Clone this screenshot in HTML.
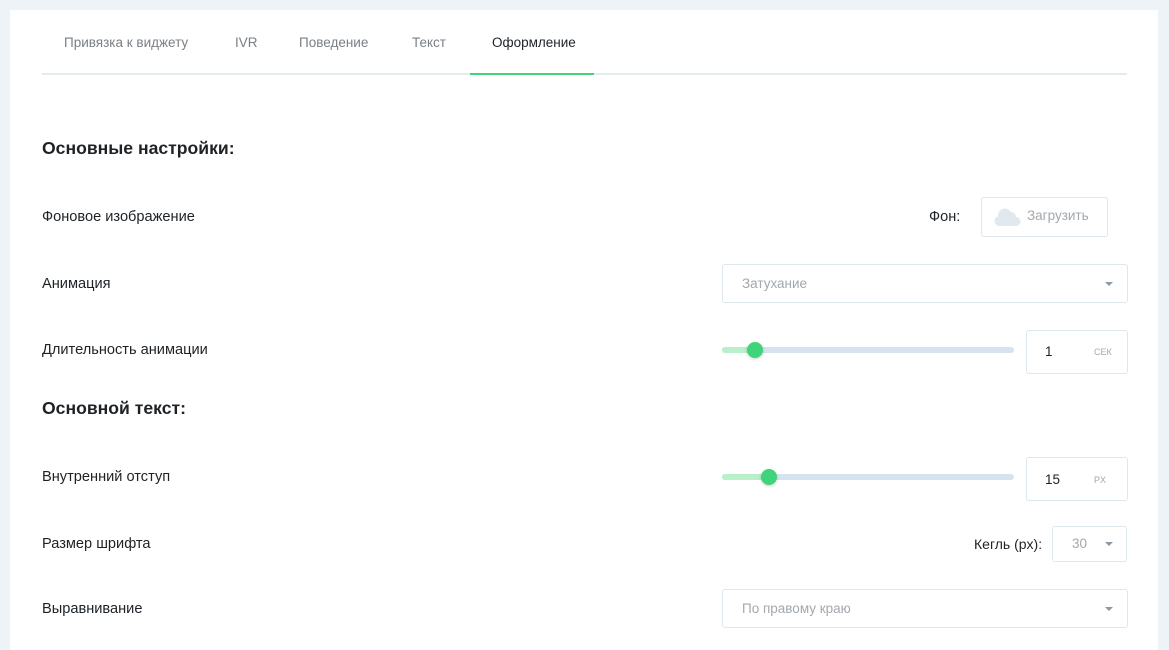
<!DOCTYPE html>
<html><head><meta charset="utf-8"><style>
body{margin:0;width:1169px;height:640px;background:#edf3f6;font-family:"Liberation Sans",sans-serif;overflow:hidden;position:relative}
.card{position:absolute;left:10px;top:10px;width:1148px;height:640px;background:#fff}
.a{position:absolute;white-space:nowrap}
.tab{top:35px;font-size:13.5px;color:#7a7f84}
.lbl{font-size:14.6px;color:#1d2226;left:42px}
.h{font-size:17.6px;font-weight:bold;color:#1d2226;left:42px}
.box{position:absolute;border:1px solid #dde8ec;border-radius:3px;box-sizing:border-box;background:#fff}
.ph{color:#a3a8ad;font-size:13.5px}
.chev{position:absolute;width:0;height:0;border-left:4px solid transparent;border-right:4px solid transparent;border-top:4px solid #8a9aa6}
.track{position:absolute;left:722px;width:292px;height:6px;border-radius:3px;background:#d5e3f0}
.fill{position:absolute;left:722px;height:6px;border-radius:3px 0 0 3px;background:#b8f0c9}
.thumb{position:absolute;width:16px;height:16px;border-radius:50%;background:#3fd37a;box-shadow:0 1px 3px rgba(0,0,0,.2)}
</style></head><body>
<div class="card"></div>
<div class="a tab" style="left:64px">Привязка к виджету</div>
<div class="a tab" style="left:235px">IVR</div>
<div class="a tab" style="left:299px">Поведение</div>
<div class="a tab" style="left:412px">Текст</div>
<div class="a tab" style="left:492px;color:#1d2226">Оформление</div>
<div class="a" style="left:42px;top:73px;width:1085px;height:2px;background:#e3ebee"></div>
<div class="a" style="left:470px;top:73px;width:124px;height:2px;background:#3fd37a"></div>

<div class="a h" style="top:138px">Основные настройки:</div>
<div class="a lbl" style="top:209px">Фоновое изображение</div>
<div class="a" style="left:929px;top:209px;font-size:14.6px;color:#1d2226">Фон:</div>
<div class="box" style="left:981px;top:197px;width:127px;height:40px"></div>
<svg class="a" style="left:993px;top:207px" width="28" height="20" viewBox="0 0 28 20"><path d="M6 19a5 5 0 0 1-1-9.8A7 7 0 0 1 18 5a5 5 0 0 1 5 5 4.5 4.5 0 0 1 0 9z" fill="#dfe9ef"/></svg>
<div class="a ph" style="left:1027px;top:208px">Загрузить</div>

<div class="a lbl" style="top:276px">Анимация</div>
<div class="box" style="left:722px;top:264px;width:406px;height:39px"></div>
<div class="a ph" style="left:742px;top:276px">Затухание</div>
<div class="chev" style="left:1105px;top:282px"></div>

<div class="a lbl" style="top:342px">Длительность анимации</div>
<div class="track" style="top:347px"></div>
<div class="fill" style="top:347px;width:33px"></div>
<div class="thumb" style="left:747px;top:342px"></div>
<div class="box" style="left:1026px;top:330px;width:102px;height:44px"></div>
<div class="a" style="left:1045px;top:344px;font-size:13.5px;color:#1d2226">1</div>
<div class="a" style="left:1094px;top:347px;font-size:9px;color:#a3a8ad">СЕК</div>

<div class="a h" style="top:398px">Основной текст:</div>
<div class="a lbl" style="top:469px">Внутренний отступ</div>
<div class="track" style="top:474px"></div>
<div class="fill" style="top:474px;width:47px"></div>
<div class="thumb" style="left:761px;top:469px"></div>
<div class="box" style="left:1026px;top:457px;width:102px;height:44px"></div>
<div class="a" style="left:1045px;top:472px;font-size:13.5px;color:#1d2226">15</div>
<div class="a" style="left:1094px;top:475px;font-size:9px;color:#a3a8ad">PX</div>

<div class="a lbl" style="top:536px">Размер шрифта</div>
<div class="a" style="left:974px;top:536px;font-size:14px;color:#1d2226">Кегль (px):</div>
<div class="box" style="left:1052px;top:526px;width:75px;height:36px"></div>
<div class="a ph" style="left:1072px;top:536px">30</div>
<div class="chev" style="left:1105px;top:542px"></div>

<div class="a lbl" style="top:601px">Выравнивание</div>
<div class="box" style="left:722px;top:589px;width:406px;height:39px"></div>
<div class="a ph" style="left:742px;top:601px">По правому краю</div>
<div class="chev" style="left:1105px;top:607px"></div>
</body></html>
